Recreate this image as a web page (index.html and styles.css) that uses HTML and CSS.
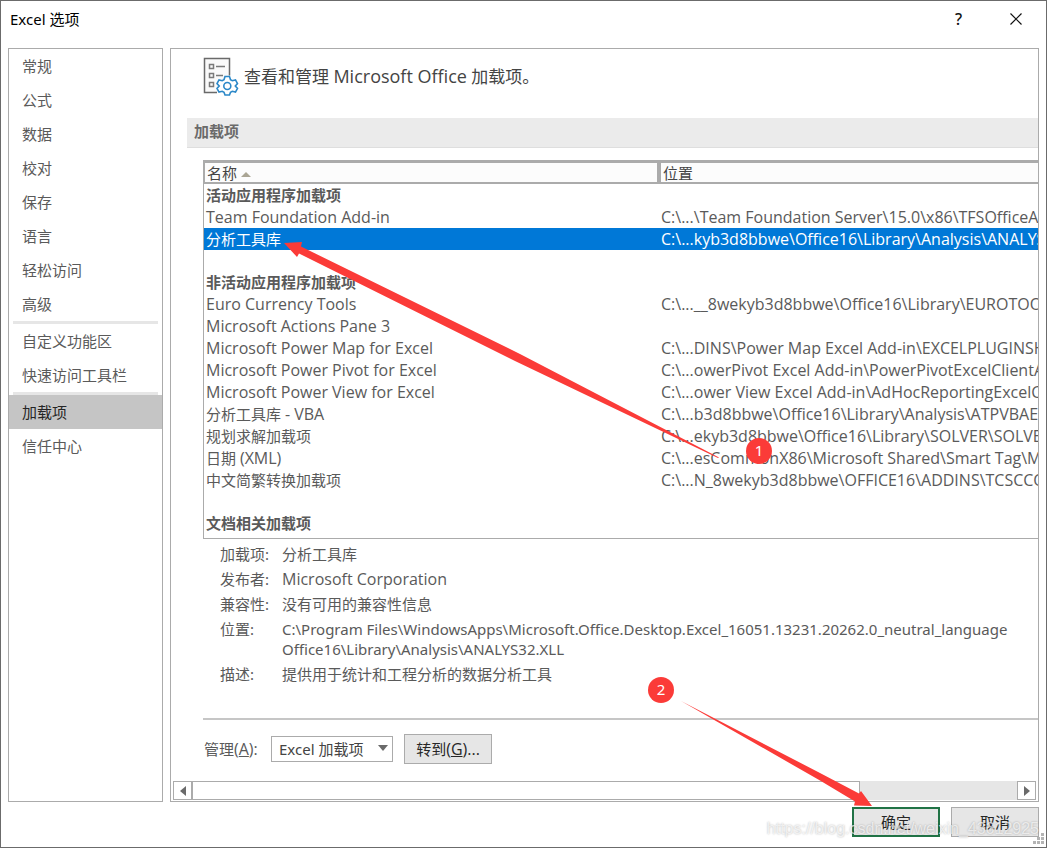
FILE: index.html
```html
<!DOCTYPE html>
<html lang="zh-CN">
<head>
<meta charset="utf-8">
<title>Excel 选项</title>
<link rel="stylesheet" href="styles.css">
</head>
<body>
<div class="dialog">
  <header class="titlebar">
    <h1 class="title">Excel 选项</h1>
    <button class="caption-button help" type="button" aria-label="帮助">?</button>
    <button class="caption-button" type="button" aria-label="关闭">
      <svg width="14" height="14" viewBox="0 0 14 14"><path d="M1.5 1.5l11 11M12.5 1.5l-11 11" stroke="#111" stroke-width="1.2" fill="none"/></svg>
    </button>
  </header>

  <div class="content">
    <nav class="nav">
      <button class="nav-item" type="button">常规</button>
      <button class="nav-item" type="button">公式</button>
      <button class="nav-item" type="button">数据</button>
      <button class="nav-item" type="button">校对</button>
      <button class="nav-item" type="button">保存</button>
      <button class="nav-item" type="button">语言</button>
      <button class="nav-item" type="button">轻松访问</button>
      <button class="nav-item" type="button">高级</button>
      <div class="nav-separator"></div>
      <button class="nav-item" type="button">自定义功能区</button>
      <button class="nav-item" type="button">快速访问工具栏</button>
      <div class="nav-separator"></div>
      <button class="nav-item selected" type="button">加载项</button>
      <button class="nav-item" type="button">信任中心</button>
    </nav>

    <main class="panel">
      <div class="intro">
        <svg width="36" height="40" viewBox="0 0 36 40" fill="none">
          <path d="M14 36.500H1.500V2.500h25v17" fill="#fafafa" stroke="#6a6a6a" stroke-width="1.500"/>
          <g stroke="#7a7a7a" stroke-width="1.500">
            <rect x="6.500" y="8.500" width="4" height="4"/><rect x="6.500" y="17.500" width="4" height="4"/><rect x="6.500" y="26.500" width="4" height="4"/>
            <path d="M13 10.500h9M13 19.500h7"/>
          </g>
          <path d="M22 20.500h4.500l1 3.200 1.800 1 3.200-.8 2 3.700-2.200 2.400 2.200 2.400-2 3.700-3.200-.8-1.800 1-1 2.700H22l-1-2.700-1.800-1-3.200.8-2-3.700 2.200-2.400-2.200-2.400 2-3.700 3.200.8 1.800-1z" fill="#fff" stroke="#2b88c8" stroke-width="1.600"/>
          <circle cx="24.300" cy="30" r="3.500" stroke="#2b88c8" stroke-width="1.600"/>
        </svg>
        <h2 class="intro-text">查看和管理 <span class="intro-product">Microsoft Office</span> 加载项。</h2>
      </div>
      <h3 class="section-title">加载项</h3>

      <div class="section-body">
        <table class="addins">
          <colgroup><col class="col-name"><col></colgroup>
          <thead>
            <tr><th>名称 <svg class="sort" width="10" height="5" viewBox="0 0 10 5"><path d="M0 5l5-5 5 5z" fill="#aaa594"/></svg></th><th>位置</th></tr>
          </thead>
          <tbody>
            <tr class="group"><td colspan="2">活动应用程序加载项</td></tr>
            <tr><td class="latin">Team Foundation Add-in</td><td class="latin">C:\...\Team Foundation Server\15.0\x86\TFSOfficeAdd-in.dll</td></tr>
            <tr class="active"><td>分析工具库</td><td class="latin">C:\...kyb3d8bbwe\Office16\Library\Analysis\ANALYS32.XLL</td></tr>
            <tr class="spacer"><td colspan="2"></td></tr>
            <tr class="group"><td colspan="2">非活动应用程序加载项</td></tr>
            <tr><td class="latin">Euro Currency Tools</td><td class="latin">C:\...__8wekyb3d8bbwe\Office16\Library\EUROTOOL.XLAM</td></tr>
            <tr><td class="latin">Microsoft Actions Pane 3</td><td></td></tr>
            <tr><td class="latin">Microsoft Power Map for Excel</td><td class="latin">C:\...DINS\Power Map Excel Add-in\EXCELPLUGINSHELL.DLL</td></tr>
            <tr><td class="latin">Microsoft Power Pivot for Excel</td><td class="latin">C:\...owerPivot Excel Add-in\PowerPivotExcelClientAddIn.dll</td></tr>
            <tr><td class="latin">Microsoft Power View for Excel</td><td class="latin">C:\...ower View Excel Add-in\AdHocReportingExcelClient.dll</td></tr>
            <tr><td>分析工具库 <span class="latin">- VBA</span></td><td class="latin">C:\...b3d8bbwe\Office16\Library\Analysis\ATPVBAEN.XLAM</td></tr>
            <tr><td>规划求解加载项</td><td class="latin">C:\...ekyb3d8bbwe\Office16\Library\SOLVER\SOLVER.XLAM</td></tr>
            <tr><td>日期 <span class="latin">(XML)</span></td><td class="latin">C:\...esCommonX86\Microsoft Shared\Smart Tag\MOFL.DLL</td></tr>
            <tr><td>中文简繁转换加载项</td><td class="latin">C:\...N_8wekyb3d8bbwe\OFFICE16\ADDINS\TCSCCONV.DLL</td></tr>
            <tr class="spacer"><td colspan="2"></td></tr>
            <tr class="group"><td colspan="2">文档相关加载项</td></tr>
          </tbody>
        </table>

        <dl class="details">
          <dt>加载项:</dt><dd>分析工具库</dd>
          <dt>发布者:</dt><dd class="latin">Microsoft Corporation</dd>
          <dt>兼容性:</dt><dd>没有可用的兼容性信息</dd>
          <dt>位置:</dt><dd>C:\Program Files\WindowsApps\Microsoft.Office.Desktop.Excel_16051.13231.20262.0_neutral_language<br>Office16\Library\Analysis\ANALYS32.XLL</dd>
          <dt>描述:</dt><dd>提供用于统计和工程分析的数据分析工具</dd>
        </dl>

        <div class="manage">
          <label class="manage-label" for="manage">管理<span class="latin">(<u>A</u>):</span></label>
          <div class="select-wrap">
            <select id="manage"><option>Excel 加载项</option></select>
            <svg class="select-arrow" width="10" height="6" viewBox="0 0 10 6"><path d="M0 0h10l-5 6z" fill="#6a6a6a"/></svg>
          </div>
          <button class="button" type="button">转到<span class="latin">(<u>G</u>)...</span></button>
        </div>
      </div>

      <div class="scrollbar">
        <button class="scroll-step" type="button" aria-label="向左滚动"><svg width="6" height="10" viewBox="0 0 6 10"><path d="M6 0v10l-6-5z" fill="#6a6a6a"/></svg></button>
        <div class="scroll-track"><div class="scroll-thumb"></div></div>
        <button class="scroll-step" type="button" aria-label="向右滚动"><svg width="6" height="10" viewBox="0 0 6 10"><path d="M0 0v10l6-5z" fill="#6a6a6a"/></svg></button>
      </div>
    </main>
  </div>

  <footer class="footer">
    <button class="button primary" type="button">确定</button>
    <button class="button" type="button">取消</button>
  </footer>

  <svg class="grip" width="12" height="12" viewBox="0 0 12 12" fill="#b4b4b4"><path d="M8 0h3v3H8zM4 4h3v3H4zM8 4h3v3H8zM0 8h3v3H0zM4 8h3v3H4zM8 8h3v3H8z"/></svg>
  <svg class="arrows" width="1047" height="848" viewBox="0 0 1047 848" fill="#fb3b38">
    <path d="M284 243L302 242 301 246.500 520 354 719 457.500 718 458 515 361 299 253.500 297 257z"/>
    <path d="M681 701L820 773 859 793.500 861 791 872 806 854 805.500 855 801.500 820 780.500z"/>
  </svg>
  <span class="badge badge-one">1</span>
  <span class="badge badge-two">2</span>
  <span class="watermark">https://blog.csdn.net/weixin_43612925</span>
</div>
</body>
</html>
```
FILE: styles.css
```css
* { box-sizing: border-box; }

body {
  margin: 0;
  font: 15px/20px "Noto Sans", "Noto Sans CJK SC", sans-serif;
  color: #5a5a5a;
  background: #fff;
}

h1, h2, h3, dl, dd { margin: 0; font-weight: 400; }

button, select { font: inherit; color: inherit; }

.latin { font-family: "Open Sans", sans-serif; font-size: 16px; }

.dialog {
  position: relative;
  display: flex;
  flex-direction: column;
  min-height: 100vh;
  padding: 0 7px 10px;
  border: 1px solid #6b6b6b;
  overflow: hidden;
}

.titlebar { display: flex; align-items: center; height: 36px; margin-right: -5px; }
.title { flex: 1; padding-left: 2px; font-size: 15px; color: #000; }
.caption-button {
  display: flex;
  align-items: center;
  justify-content: center;
  width: 57px;
  height: 36px;
  padding: 0;
  border: 0;
  background: none;
}
.help { font-size: 16px; font-weight: 500; color: #111; }

.content { display: flex; flex: 1; gap: 7px; margin-top: 11px; }

.nav { flex: none; width: 155px; border: 1px solid #ababab; }
.nav-item {
  display: block;
  width: 100%;
  height: 34px;
  padding: 0 13px;
  border: 0;
  background: none;
  text-align: left;
}
.nav-item.selected { background: #c5c5c5; color: #262626; }
.nav-separator { height: 3px; margin: 0 4px; background: #e6e6e6; }

.panel {
  display: flex;
  flex: 1;
  flex-direction: column;
  min-width: 0;
  border: 1px solid #ababab;
}

.intro { display: flex; align-items: center; gap: 5px; height: 54px; margin-left: 32px; }
.intro-text { font-size: 17px; line-height: 24px; color: #444; }
.intro-product { font-family: "Open Sans", sans-serif; font-size: 18px; }

.section-title {
  height: 30px;
  margin: 15px 0 12px 16px;
  padding: 0 7px;
  border-bottom: 1px solid #dedede;
  background: #ebebeb;
  font-size: 15px;
  line-height: 27px;
  font-weight: 700;
  color: #6a6a6a;
}

.section-body { flex: 1; margin-left: 32px; overflow: hidden; white-space: nowrap; }

.addins {
  width: 100%;
  table-layout: fixed;
  border-collapse: separate;
  border-spacing: 0;
  border: solid #ababab;
  border-width: 0 0 1px 1px;
  padding-bottom: 4px;
}
.col-name { width: 455px; }
.addins th {
  height: 24px;
  padding: 1px 2px 0;
  border: solid #ababab;
  border-width: 3px 2px 2px 1px;
  background: #fcfcfc;
  text-align: left;
  font-weight: 400;
  line-height: 18px;
  color: #444;
}
.addins th + th { border-left-width: 2px; border-right: 0; }
.addins td { height: 22px; padding: 0 2px; overflow: hidden; }
.addins .spacer td { height: 21px; }
.addins .group { font-weight: 700; }
.addins .active { background: #0078d7; color: #fff; }
.sort { vertical-align: middle; }

.details {
  display: grid;
  grid-template-columns: 62px 1fr;
  row-gap: 5px;
  padding: 5px 0 34px 17px;
  border-bottom: 2px solid #c6c6c6;
}

.manage { display: flex; align-items: center; padding-top: 14px; }
.manage-label { width: 68px; padding-left: 1px; }
.select-wrap { position: relative; margin-right: 11px; }
.manage select {
  appearance: none;
  width: 122px;
  height: 26px;
  padding: 0 7px;
  border: 1px solid #ababab;
  border-radius: 0;
  background: #fff;
  color: #444;
}
.select-arrow { position: absolute; right: 5px; top: 9px; pointer-events: none; }

.button {
  width: 88px;
  height: 30px;
  padding: 0;
  border: 1px solid #ababab;
  background: #e6e6e6;
  color: #262626;
}
.button.primary { border: 2px solid #217346; }

.scrollbar { display: flex; height: 19px; margin: 0 2px 1px; }
.scroll-step {
  display: flex;
  align-items: center;
  justify-content: center;
  width: 19px;
  padding: 0;
  border: 1px solid #ababab;
  background: #fff;
}
.scroll-track { flex: 1; background: #e6e6e6; }
.scroll-thumb { width: 81%; height: 100%; border: 1px solid #ababab; background: #fff; }

.footer { display: flex; justify-content: flex-end; gap: 11px; padding-top: 5px; }

.grip { position: absolute; right: 1px; bottom: 2px; }
.arrows { position: absolute; left: -1px; top: -1px; pointer-events: none; }
.badge {
  position: absolute;
  width: 26px;
  height: 26px;
  border-radius: 50%;
  background: #fb3b38;
  color: #fff;
  line-height: 24px;
  text-align: center;
}
.badge-one { left: 745px; top: 437px; }
.badge-two { left: 647px; top: 676px; }
.watermark {
  position: absolute;
  right: 7px;
  bottom: 8px;
  font: 16px/20px "Liberation Sans", sans-serif;
  color: rgba(255, 255, 255, 0.7);
  text-shadow: 0 0 2px rgba(0, 0, 0, 0.3);
  pointer-events: none;
}
```
